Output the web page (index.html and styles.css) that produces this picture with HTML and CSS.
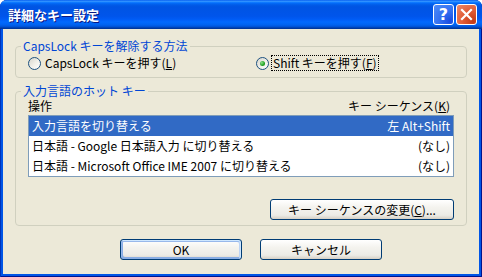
FILE: index.html
```html
<!DOCTYPE html>
<html lang="ja">
<head>
<meta charset="utf-8">
<title>詳細なキー設定</title>
<link rel="stylesheet" href="styles.css">
</head>
<body>
<div class="window">
  <div class="titlebar">
    <span class="title">詳細なキー設定</span>
    <div class="controls">
      <span class="ctl help">?</span>
      <span class="ctl close"><svg width="13" height="13" viewBox="0 0 13 13"><path d="M2 2 L11 11 M11 2 L2 11" stroke="#fff" stroke-width="2.2" stroke-linecap="square" fill="none"/></svg></span>
    </div>
  </div>
  <div class="client">
    <fieldset class="group g1">
      <legend>CapsLock キーを解除する方法</legend>
      <div class="radios">
        <div class="radio"><span class="dot"></span><span class="rtext">CapsLock キーを押す(<u>L</u>)</span></div>
        <div class="radio checked"><span class="dot"></span><span class="rtext focus">Shift キーを押す(<u>F</u>)</span></div>
      </div>
    </fieldset>
    <fieldset class="group g2">
      <legend>入力言語のホット キー</legend>
      <div class="listhead"><span>操作</span><span>キー シーケンス(<u>K</u>)</span></div>
      <div class="list">
        <div class="row sel"><span>入力言語を切り替える</span><span>左 Alt+Shift</span></div>
        <div class="row"><span>日本語 - Google 日本語入力 に切り替える</span><span>(なし)</span></div>
        <div class="row"><span>日本語 - Microsoft Office IME 2007 に切り替える</span><span>(なし)</span></div>
      </div>
      <div class="actions"><span class="btn wide">キー シーケンスの変更(<u>C</u>)...</span></div>
    </fieldset>
    <div class="footer">
      <span class="btn dlg default">OK</span>
      <span class="btn dlg">キャンセル</span>
    </div>
  </div>
</div>
</body>
</html>
```

FILE: styles.css
```css
* { box-sizing: border-box; }
html, body { margin: 0; padding: 0; }
body {
  width: 482px;
  height: 277px;
  overflow: hidden;
  background: #ffffff;
  font-family: "MS UI Gothic", "Liberation Sans Narrow", "Noto Sans CJK JP", sans-serif;
  font-size: 12px;
  line-height: 14px;
  color: #000;
}
.window {
  width: 482px;
  height: 277px;
  display: flex;
  flex-direction: column;
  background: #0055e6;
  border-radius: 7px 7px 0 0;
  box-shadow: inset 1px 0 #0033b8, inset -1px 0 #00138c, inset 0 -1px #00138c;
  overflow: hidden;
}
.titlebar {
  height: 29px;
  flex: none;
  display: flex;
  align-items: center;
  justify-content: space-between;
  padding: 0 5px 0 8px;
  background: linear-gradient(to bottom, #0058ee 0%, #3593ff 4%, #288eff 6%, #127dff 8%, #036ffc 10%, #0262ee 14%, #0057e5 20%, #0054e3 24%, #0055eb 56%, #005bf5 66%, #026afe 76%, #0062ef 86%, #0052d6 92%, #0040ab 96%, #003092 100%);
}
.title {
  color: #fff;
  font-family: "Noto Sans CJK JP", sans-serif;
  font-weight: 700;
  font-size: 13px;
  line-height: 16px;
  text-shadow: 1px 1px #0a1883;
}
.controls { display: flex; gap: 2px; }
.ctl {
  width: 21px;
  height: 21px;
  border: 1px solid #fff;
  border-radius: 3px;
  display: flex;
  align-items: center;
  justify-content: center;
}
.help {
  background: radial-gradient(circle at 85% 85%, #1a4be0 0%, #2f6cf0 40%, #4f8df8 100%);
  color: #fff;
  font-family: "DejaVu Sans", sans-serif;
  font-weight: 700;
  font-size: 16px;
  line-height: 19px;
}
.close {
  background: radial-gradient(circle at 85% 85%, #c23a16 0%, #e05a34 45%, #ee8a6a 100%);
}
.client {
  flex: 1;
  margin: 0 3px 3px 3px;
  background: #ece9d8;
  padding: 10px 12px 0 12px;
  display: flex;
  flex-direction: column;
}
.group {
  margin: 0;
  border: 1px solid #d0d0bf;
  border-radius: 4px;
  min-width: 0;
}
.group legend {
  color: #0046d5;
  padding: 0 2px;
  margin-left: -7px;
  line-height: 14px;
}
.g1 { padding: 2px 12px 6px 12px; }
.radios {
  display: grid;
  grid-template-columns: 228px 1fr;
  height: 16px;
}
.radio {
  display: flex;
  align-items: center;
}
.dot {
  width: 13px;
  height: 13px;
  border-radius: 50%;
  border: 1px solid #1c5180;
  background: linear-gradient(135deg, #d6d5cc 0%, #f2f1ea 55%, #ffffff 100%);
  display: grid;
  place-items: center;
  flex: none;
}
.checked .dot::after {
  content: "";
  width: 5px;
  height: 5px;
  border-radius: 50%;
  background: radial-gradient(circle at 35% 35%, #8ce08a 0%, #21a121 60%, #1a861a 100%);
}
.rtext {
  margin-left: 2px;
  padding: 0 1px;
  line-height: 14px;
  border: 1px solid transparent;
}
.rtext.focus { border: 1px dotted #000; }
.g2 {
  margin-top: 6px;
  padding: 0 12px 5px 12px;
}
.listhead {
  display: flex;
  justify-content: space-between;
  padding: 1px 4px 0 0;
  line-height: 14px;
}
.list {
  margin-top: 2px;
  border: 1px solid #7f9db9;
  background: #fff;
}
.row {
  height: 20px;
  line-height: 20px;
  padding: 0 3px;
  display: flex;
  justify-content: space-between;
}
.row.sel { background: #316ac5; color: #fff; }
.actions {
  margin-top: 22px;
  display: flex;
  justify-content: flex-end;
}
.btn {
  height: 21px;
  border: 1px solid #003c74;
  border-radius: 3px;
  background: linear-gradient(to bottom, #ffffff 0%, #f4f3ee 40%, #ecebe6 80%, #d6d0c5 100%);
  display: flex;
  align-items: center;
  justify-content: center;
  line-height: 14px;
}
.btn.wide { width: 184px; }
.footer {
  margin-top: 13px;
  padding-left: 105px;
  display: flex;
  gap: 18px;
}
.btn.dlg { width: 122px; }
.btn.default {
  box-shadow: inset -1px 1px #cee7ff, inset 1px 2px #98b8ea, inset -2px 2px #bcd4f6, inset 1px -1px #89ade4, inset 2px -2px #89ade4;
}
u { text-decoration: underline; text-underline-offset: 1px; }
```
